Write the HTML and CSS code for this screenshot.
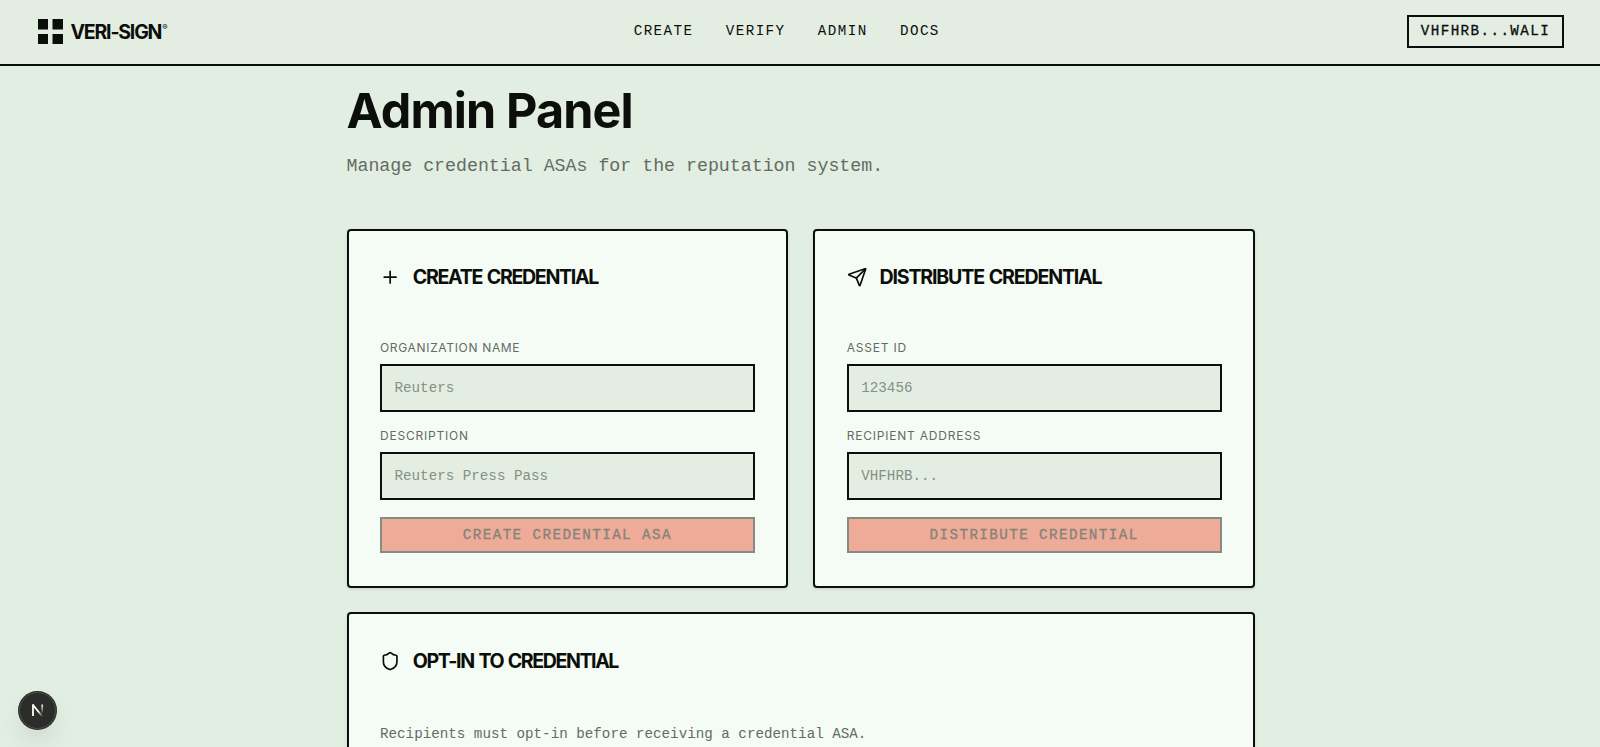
FILE: index.html
```html
<!DOCTYPE html>
<html lang="en">
<head>
<meta charset="utf-8">
<title>Veri-Sign Admin</title>
<link rel="stylesheet" href="styles.css">
</head>
<body>
<header class="header">
  <a class="brand">
    <svg class="brand-mark" viewBox="0 0 25 25" fill="currentColor"><path d="M0 0h10v10.500H0zM14.500 0H25v10.500H14.500zM0 15h10v10H0zM14.500 15H25v10H14.500z"/></svg>
    <span class="brand-name">VERI-SIGN</span><span class="brand-reg">®</span>
  </a>
  <nav class="nav"><a>CREATE</a><a>VERIFY</a><a>ADMIN</a><a>DOCS</a></nav>
  <button class="wallet">VHFHRB...WALI</button>
</header>
<main class="main">
  <h1 class="title">Admin Panel</h1>
  <p class="subtitle">Manage credential ASAs for the reputation system.</p>
  <div class="grid">
    <section class="card">
      <div class="card-head">
        <svg class="icon" viewBox="0 0 24 24"><path d="M5 12h14M12 5v14"/></svg>
        <h2 class="card-title t-create">CREATE CREDENTIAL</h2>
      </div>
      <label class="label l-org">ORGANIZATION NAME</label>
      <input class="input" placeholder="Reuters">
      <label class="label">DESCRIPTION</label>
      <input class="input" placeholder="Reuters Press Pass">
      <button class="submit" disabled>CREATE CREDENTIAL ASA</button>
    </section>
    <section class="card">
      <div class="card-head">
        <svg class="icon" viewBox="0 0 24 24"><path d="M14.536 21.686a.5.5 0 0 0 .937-.024l6.500-19a.496.496 0 0 0-.635-.635l-19 6.500a.5.5 0 0 0-.024.937l7.930 3.180a2 2 0 0 1 1.112 1.110z"/><path d="m21.854 2.147-10.940 10.939"/></svg>
        <h2 class="card-title t-dist">DISTRIBUTE CREDENTIAL</h2>
      </div>
      <label class="label">ASSET ID</label>
      <input class="input" placeholder="123456">
      <label class="label">RECIPIENT ADDRESS</label>
      <input class="input" placeholder="VHFHRB...">
      <button class="submit" disabled>DISTRIBUTE CREDENTIAL</button>
    </section>
    <section class="card card-wide">
      <div class="card-head">
        <svg class="icon" viewBox="0 0 24 24"><path d="M20 13c0 5-3.500 7.500-7.660 8.950a1 1 0 0 1-.67-.01C7.500 20.500 4 18 4 13V6a1 1 0 0 1 1-1c2 0 4.500-1.200 6.240-2.720a1.170 1.170 0 0 1 1.520 0C14.510 3.810 17 5 19 5a1 1 0 0 1 1 1z"/></svg>
        <h2 class="card-title t-opt">OPT-IN TO CREDENTIAL</h2>
      </div>
      <p class="note">Recipients must opt-in before receiving a credential ASA.</p>
    </section>
  </div>
</main>
<div class="dev-badge">
  <svg class="dev-icon" viewBox="0 0 14 14" fill="none">
    <defs>
      <linearGradient id="fade-diag" x1="7.500" y1="8" x2="12" y2="13.500" gradientUnits="userSpaceOnUse"><stop stop-color="#fff"/><stop offset="1" stop-color="#fff" stop-opacity="0"/></linearGradient>
      <linearGradient id="fade-stem" x1="11" y1="1" x2="11" y2="11" gradientUnits="userSpaceOnUse"><stop stop-color="#fff"/><stop offset="1" stop-color="#fff" stop-opacity="0"/></linearGradient>
    </defs>
    <path d="M2 13V1.500" stroke="#fff" stroke-width="1.800"/>
    <path d="M1.700 1.600 11.800 14" stroke="url(#fade-diag)" stroke-width="1.800"/>
    <path d="M11.200 1.500v9" stroke="url(#fade-stem)" stroke-width="1.700"/>
  </svg>
</div>
</body>
</html>
```
FILE: styles.css
```css
* { box-sizing: border-box; margin: 0; padding: 0; }
:root {
  --ink: #0c0e0b;
  --bg: #e2eee2;
  --card: #f5fcf5;
  --muted: #646b64;
  --mono: "Liberation Mono", monospace;
  --sans: Inter, "Liberation Sans", sans-serif;
}
body { height: 747px; overflow: hidden; background: var(--bg); color: var(--ink); font-family: var(--mono); }
button, input { font: inherit; color: inherit; border-radius: 0; }

.header {
  display: grid; grid-template-columns: 1fr auto 1fr; align-items: center;
  height: 66px; padding: 0 36.500px 2px 38px; border-bottom: 2px solid var(--ink); background: #e3ede2;
}
.brand { display: flex; align-items: center; font-family: var(--sans); }
.brand-mark { width: 25px; height: 25px; margin-right: 7.500px; }
.brand-name { font-size: 19.500px; line-height: 28px; font-weight: 700; letter-spacing: -1.200px; padding-top: 1px; }
.brand-reg { font-size: 8px; line-height: 8px; align-self: flex-start; margin: 6px 0 0 1px; }
.nav { display: flex; gap: 32.300px; font-size: 14.230px; letter-spacing: 1.430px; line-height: 20px; margin-right: -1px; transform: translateX(-14.500px); }
.wallet {
  justify-self: end; width: 157px; height: 33px; border: 2px solid var(--ink); background: transparent;
  font-size: 14.230px; letter-spacing: 1.420px; padding-left: 1px; -webkit-text-stroke: .3px var(--ink);
}

.main { width: 908.500px; margin: 0 auto 0 346.500px; padding-top: 20px; }
.title { font-family: var(--sans); font-size: 48.500px; line-height: 50px; font-weight: 700; letter-spacing: -.870px; }
.subtitle { margin-top: 16px; font-size: 18.250px; line-height: 29px; color: var(--muted); }
.grid { display: grid; grid-template-columns: 1fr 1fr; gap: 24px 25px; margin-top: 48px; }
.card {
  display: flex; flex-direction: column; height: 359px; padding: 32.500px 31.500px;
  background: var(--card); border: 2px solid var(--ink); border-radius: 4px; box-shadow: 0 1px 3px rgba(0, 0, 0, .12);
}
.card-wide { grid-column: 1 / -1; height: 300px; padding-top: 33.500px; }
.card-head { display: flex; align-items: center; gap: 12.500px; height: 27px; margin-bottom: 49px; }
.icon { width: 20.300px; height: 20.300px; fill: none; stroke: currentColor; stroke-width: 2; stroke-linecap: round; stroke-linejoin: round; }
.card-title { font-family: var(--sans); font-size: 19.600px; line-height: 27px; font-weight: 700; white-space: nowrap; word-spacing: 1.500px; }
.t-create { letter-spacing: -1.330px; }
.t-dist { letter-spacing: -1.190px; }
.t-opt { letter-spacing: -1.430px; }
.label { font-family: var(--sans); font-size: 12px; line-height: 16px; letter-spacing: .780px; color: var(--muted); margin-bottom: 8px; }
.l-org { letter-spacing: .670px; }
.input {
  width: 100%; height: 48px; margin-bottom: 16.700px; padding: 0 12.500px;
  border: 2px solid var(--ink); background: #e3ede2; font-size: 14.230px; outline: 0;
}
.input::placeholder { color: #859084; opacity: 1; }
.submit {
  width: 100%; height: 36.500px; border: 2px solid #858a82; background: #eeab98; color: #858379;
  font-size: 14.230px; letter-spacing: 1.420px; -webkit-text-stroke: .3px #858379;
}
.note { font-size: 14.230px; line-height: 20px; color: var(--muted); }

.dev-badge {
  position: fixed; left: 19px; top: 691.500px; width: 37px; height: 37px; border-radius: 50%;
  display: grid; place-items: center; background: #2c2d2b; border: 1px solid #4b4e4a;
  box-shadow: 0 0 0 1px #2a2c29, 0 14px 28px -4px rgba(0, 0, 0, .12);
}
.dev-icon { width: 14px; height: 14px; }
```
